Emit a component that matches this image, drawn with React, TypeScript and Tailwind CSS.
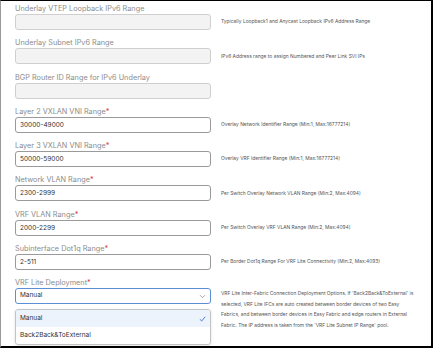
type Field = {
  label: string;
  required?: boolean;
  value?: string;
  disabled?: boolean;
  hint: string;
};

const fields: Field[] = [
  { label: "Underlay VTEP Loopback IPv6 Range", disabled: true, hint: "Typically Loopback1 and Anycast Loopback IPv6 Address Range" },
  { label: "Underlay Subnet IPv6 Range", disabled: true, hint: "IPv6 Address range to assign Numbered and Peer Link SVI IPs" },
  { label: "BGP Router ID Range for IPv6 Underlay", disabled: true, hint: "" },
  { label: "Layer 2 VXLAN VNI Range", required: true, value: "30000-49000", hint: "Overlay Network Identifier Range (Min:1, Max:16777214)" },
  { label: "Layer 3 VXLAN VNI Range", required: true, value: "50000-59000", hint: "Overlay VRF Identifier Range (Min:1, Max:16777214)" },
  { label: "Network VLAN Range", required: true, value: "2300-2999", hint: "Per Switch Overlay Network VLAN Range (Min:2, Max:4094)" },
  { label: "VRF VLAN Range", required: true, value: "2000-2299", hint: "Per Switch Overlay VRF VLAN Range (Min:2, Max:4094)" },
  { label: "Subinterface Dot1q Range", required: true, value: "2-511", hint: "Per Border Dot1q Range For VRF Lite Connectivity (Min:2, Max:4093)" },
];

function Label({ text, required }: { text: string; required?: boolean }) {
  return (
    <div className="h-[10px] text-[7.3px] leading-[10px] text-[#8c8c8c]">
      {text}
      {required && <span className="text-[#d83b3b]">*</span>}
    </div>
  );
}

function Row({ f }: { f: Field }) {
  return (
    <div className="mb-[8.25px]">
      <Label text={f.label} required={f.required} />
      <div className="flex items-center">
        <div
          className={`w-[196px] h-[16px] shrink-0 rounded-[3px] border px-[4px] text-[6.5px] leading-[14px] text-[#333] ${
            f.disabled ? "bg-[#f3f3f3] border-[#cfcfcf]" : "bg-white border-[#9a9a9a]"
          }`}
        >
          {f.value}
        </div>
        <div className="ml-[10px] text-[4.9px] text-[#555] whitespace-nowrap">{f.hint}</div>
      </div>
    </div>
  );
}

export default function App() {
  return (
    <div
      className="w-[433px] h-[348px] overflow-hidden bg-white border-t border-t-black border-r-2 border-r-black border-b-2 border-b-black border-l border-l-[#9a9a9a]"
      style={{ fontFamily: "Inter, 'Liberation Sans', sans-serif" }}
    >
      <div className="pl-[14px] pt-[3px]">
        {fields.map((f) => (
          <Row key={f.label} f={f} />
        ))}

        <Label text="VRF Lite Deployment" required />
        <div className="flex items-start">
          <div className="w-[196px] shrink-0">
            <div className="h-[16px] rounded-[3px] border border-[#5a8fd6] px-[4px] flex items-center justify-between text-[6.5px] text-[#333]">
              <span>Manual</span>
              <svg width="7" height="5" viewBox="0 0 7 5" fill="none" stroke="#9a9a9a" strokeWidth="0.9">
                <path d="M1 1.2 L3.5 3.7 L6 1.2" />
              </svg>
            </div>
            <div className="mt-[5px] rounded-[3px] border border-[#c4c4c4] shadow-[0_1px_3px_rgba(0,0,0,0.12)] overflow-hidden text-[6.5px] text-[#333]">
              <div className="h-[17px] px-[4px] flex items-center justify-between bg-[#edf3fc]">
                <span>Manual</span>
                <svg width="7" height="6" viewBox="0 0 7 6" fill="none" stroke="#4a7fd0" strokeWidth="1">
                  <path d="M0.8 3.2 L2.7 5 L6.2 0.8" />
                </svg>
              </div>
              <div className="h-[17px] px-[4px] flex items-center">Back2Back&amp;ToExternal</div>
            </div>
          </div>
          <div className="ml-[10px] w-[196px] text-[4.9px] leading-[10.5px] text-[#555]">
            VRF Lite Inter-Fabric Connection Deployment Options. If 'Back2Back&amp;ToExternal' is selected, VRF Lite IFCs are auto created between border devices of two Easy Fabrics, and between border devices in Easy Fabric and edge routers in External Fabric. The IP address is taken from the 'VRF Lite Subnet IP Range' pool.
          </div>
        </div>
      </div>
    </div>
  );
}
